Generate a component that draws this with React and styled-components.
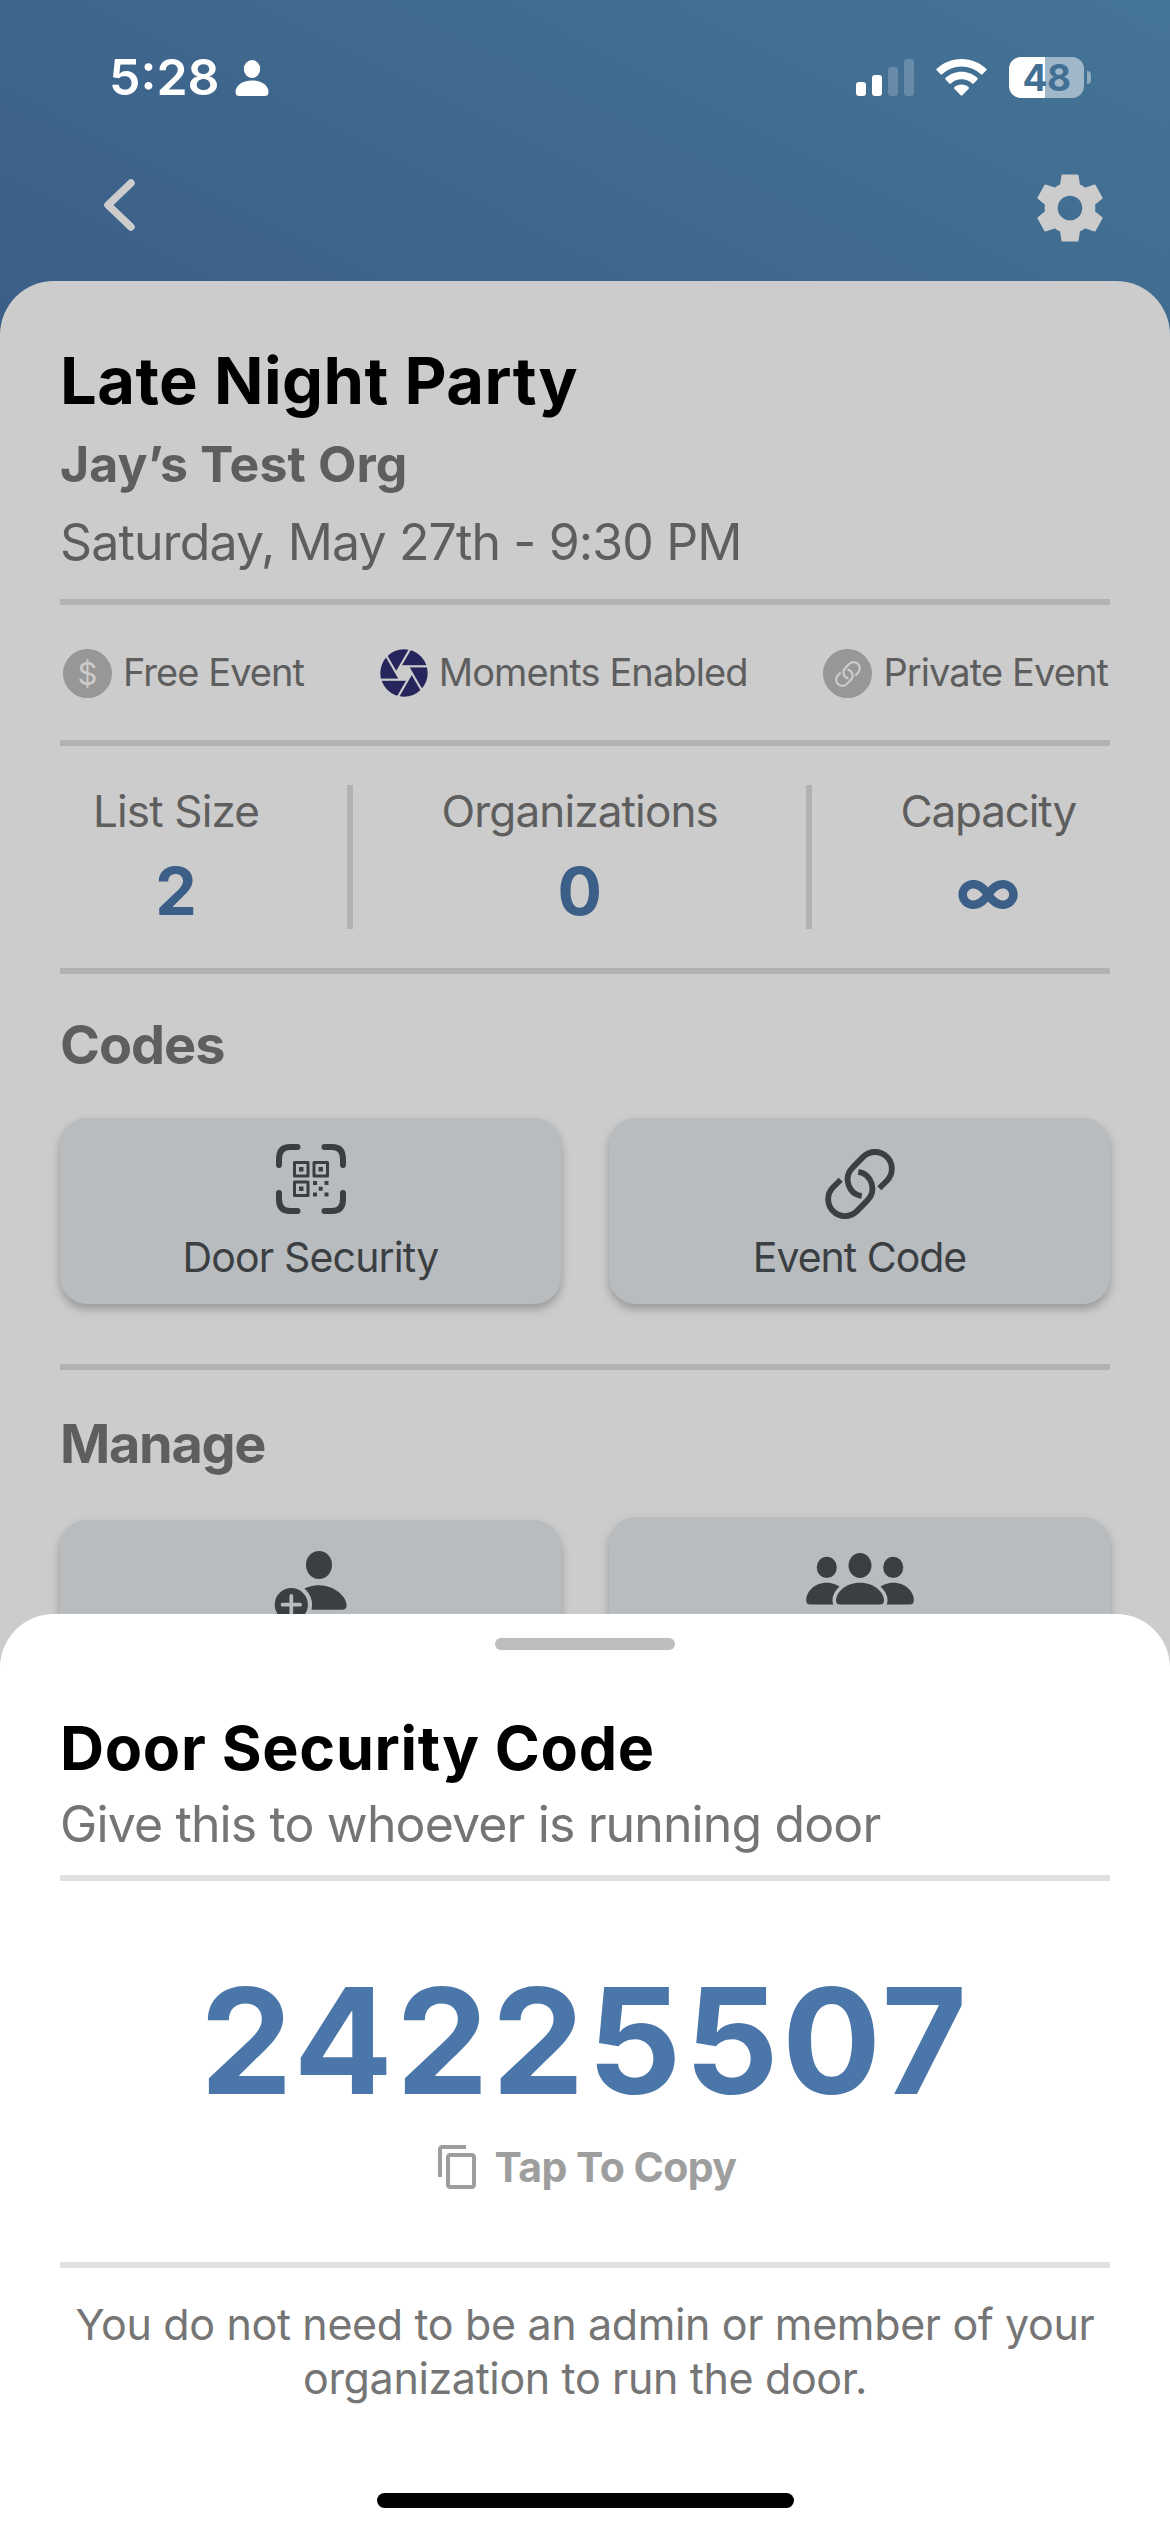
import React from "react";
import styled, { createGlobalStyle } from "styled-components";
import { MdContentCopy } from "react-icons/md";

const Global = createGlobalStyle`
  * { box-sizing: border-box; }
  body { margin: 0; font-family: Inter, "Liberation Sans", sans-serif; }
  svg { display: block; flex: none; }
`;

const Screen = styled.div`
  position: relative;
  width: 1170px;
  height: 2532px;
  overflow: hidden;
  background: linear-gradient(27deg, #3b5e87, #447496) top / 100% 340px no-repeat #ccc;
`;

const StatusBar = styled.div`
  display: flex;
  align-items: flex-end;
  height: 98px;
  padding: 0 79px 2px 109px;
  color: #fff;
`;

const Line = styled.div`
  white-space: nowrap;
  height: ${(p) => p.$h}px;
  line-height: ${(p) => p.$h}px;
  font-size: ${(p) => p.$size}px;
  font-weight: ${(p) => p.$weight || 400};
  letter-spacing: ${(p) => p.$track || 0}px;
  color: ${(p) => p.$color || "#5e5e5e"};
  margin-top: ${(p) => p.$top || 0}px;
`;

const StatusLeft = styled.div`
  display: flex;
  align-items: flex-end;
  gap: 15px;
  margin-right: auto;
`;

const StatusIcons = styled.div`
  display: flex;
  align-items: flex-end;
  gap: 22px;
`;

const BatteryWrap = styled.div`
  display: flex;
  align-items: center;
  gap: 3px;
  height: 41px;
  margin-bottom: -2px;
`;

const Battery = styled.div`
  width: 75px;
  height: 41px;
  border-radius: 12px;
  line-height: 41px;
  text-align: center;
  font-size: 37px;
  font-weight: 700;
  letter-spacing: -0.5px;
  color: #426f94;
  background: linear-gradient(90deg, #fff 48%, #a0b7c9 48%);
`;

const Nub = styled.div`
  width: 4px;
  height: 13px;
  border-radius: 0 5px 5px 0;
  background: #8fabc0;
`;

const NavBar = styled.div`
  display: flex;
  justify-content: space-between;
  align-items: flex-start;
  height: 183px;
  padding: 76px 67px 0 103px;
`;

const BackIcon = styled.svg`
  margin-top: 5px;
`;

const Card = styled.div`
  height: 2251px;
  padding: 62px 60px 0;
  border-radius: 54px 54px 0 0;
  background: #ccc;
`;

const Rule = styled.div`
  height: 6px;
  margin-top: ${(p) => p.$top || 0}px;
  background: ${(p) => p.$color || "#b2b2b2"};
`;

const Badges = styled.div`
  display: flex;
  justify-content: space-between;
  height: 135px;
  padding: 44px 2px 0 3px;
`;

const Badge = styled.div`
  display: flex;
  align-items: flex-start;
  gap: 11px;
`;

const Disc = styled.div`
  display: flex;
  align-items: center;
  justify-content: center;
  width: 49px;
  height: 49px;
  border-radius: 50%;
  background: #979797;
  color: #ccc;
  font-size: 31px;
  line-height: 49px;
`;

const Stats = styled.div`
  display: flex;
  justify-content: space-between;
  height: 222px;
  padding: 39px 34px 0 33px;
`;

const Stat = styled.div`
  display: flex;
  flex-direction: column;
  align-items: center;
`;

const Separator = styled.div`
  width: 6px;
  height: 144px;
  background: #b2b2b2;
`;

const Tiles = styled.div`
  display: grid;
  grid-template-columns: 501px 501px;
  column-gap: 48px;
  align-items: start;
  margin-top: ${(p) => p.$top}px;
`;

const Tile = styled.div`
  display: flex;
  flex-direction: column;
  align-items: center;
  height: 186px;
  margin-top: ${(p) => p.$drop || 0}px;
  padding-top: ${(p) => p.$pad}px;
  border-radius: 27px;
  background: #b8bcbf;
  color: #3b3f42;
  box-shadow: 0 5px 10px rgba(0, 0, 0, 0.26);
`;

const TileIcon = styled.div`
  height: ${(p) => p.$h}px;
`;

const Sheet = styled.div`
  position: absolute;
  left: 0;
  right: 0;
  bottom: 0;
  height: 918px;
  padding: 24px 60px 0;
  border-radius: 54px 54px 0 0;
  background: #fff;
`;

const Handle = styled.div`
  width: 180px;
  height: 12px;
  margin: 0 auto;
  border-radius: 6px;
  background: #bdbdbd;
`;

const Code = styled.div`
  margin-top: 70px;
  height: 180px;
  line-height: 180px;
  text-align: center;
  font-size: 147px;
  font-weight: 700;
  letter-spacing: 3.2px;
  color: #4b76a9;
`;

const CopyRow = styled.div`
  display: flex;
  justify-content: center;
  align-items: flex-start;
  gap: 13px;
  margin-top: 12px;
  height: 119px;
  color: #9e9e9e;
`;

const Note = styled.p`
  margin: 29px -20px 0;
  text-align: center;
  font-size: 43px;
  line-height: 54px;
  letter-spacing: -0.36px;
  color: #757575;
`;

const HomeBar = styled.div`
  width: 417px;
  height: 15px;
  margin: 88px auto 0;
  border-radius: 8px;
  background: #000;
`;

const PersonIcon = () => (
  <svg width="34" height="36" viewBox="0 0 34 36" fill="#fff">
    <ellipse cx="17" cy="9" rx="8.2" ry="9" />
    <path d="M0.5 32C0.5 26 7 20.500 17 20.500S33.500 26 33.500 32Q33.500 36 30 36H4Q0.500 36 0.500 32Z" />
  </svg>
);

const SignalIcon = () => (
  <svg width="58" height="37" viewBox="0 0 58 37" fill="#fff">
    <rect x="0" y="23" width="10" height="14" rx="3" />
    <rect x="16" y="16" width="10" height="21" rx="3" />
    <rect x="32" y="8" width="10" height="29" rx="3" opacity=".2" />
    <rect x="48" y="0" width="10" height="37" rx="3" opacity=".2" />
  </svg>
);

const WifiIcon = () => (
  <svg width="51" height="37" viewBox="0 0 51 37" fill="#fff">
    <path d="M25.500 0C35.200 0 44 3.800 50.300 9.800Q51 10.500 50.300 11.300L46.500 15.200Q45.700 16 44.900 15.200A28 28 0 0 0 6.100 15.200Q5.300 16 4.500 15.200L.7 11.300Q0 10.500.7 9.800C7 3.800 15.800 0 25.500 0Z" />
    <path d="M25.500 12.800C31.700 12.800 37.300 15.200 41.500 19Q42.200 19.700 41.500 20.500L37.600 24.400Q36.900 25 36.100 24.400A15.800 15.800 0 0 0 14.900 24.400Q14.100 25 13.400 24.400L9.500 20.500Q8.800 19.700 9.500 19C13.700 15.200 19.300 12.800 25.500 12.800Z" />
    <path d="M25.500 25.500C28.300 25.500 30.800 26.600 32.700 28.200Q33.400 28.900 32.700 29.700L26.300 36.300Q25.500 37 24.700 36.300L18.300 29.700Q17.600 28.900 18.300 28.200C20.200 26.600 22.700 25.500 25.500 25.500Z" />
  </svg>
);

const GearIcon = () => (
  <svg width="66" height="68" viewBox="-33 -34 66 68">
    <path
      fill="#ccc"
      stroke="#ccc"
      strokeWidth="2"
      strokeLinejoin="round"
      fillRule="evenodd"
      d="M-7.500 -32.500H7.500L9 -22.800Q12.300 -21.500 15 -19.300L24.700 -22.500L31.600 -10L24 -3.800Q24.700 0 24 3.800L31.600 10L24.700 22.500L15 19.300Q12.300 21.500 9 22.800L7.500 32.500H-7.500L-9 22.800Q-12.300 21.500 -15 19.300L-24.700 22.500L-31.600 10L-24 3.800Q-24.700 0 -24 -3.800L-31.600 -10L-24.700 -22.500L-15 -19.300Q-12.300 -21.500 -9 -22.800ZM0 -13.300A13.300 13.300 0 1 0 0 13.300A13.300 13.300 0 1 0 0 -13.300Z"
    />
  </svg>
);

const ApertureIcon = () => (
  <svg width="48" height="48" viewBox="-24 -24 48 48">
    <circle r="23.700" fill="#27265c" />
    <path d="M-3.800 -6.600H3.800L7.600 0L3.800 6.600H-3.800L-7.600 0Z" fill="#ccc" />
    <g stroke="#ccc" strokeWidth="2.200">
      {[0, 60, 120, 180, 240, 300].map((a) => (
        <path key={a} d="M-3 -6.700H25" transform={`rotate(${a})`} />
      ))}
    </g>
  </svg>
);

const LinkIcon = ({ size }) => (
  <svg width={size} height={size} viewBox="0 0 70 70" fill="none" stroke="currentColor" strokeWidth="5.800">
    <path d="M54.300 39.300L61.900 31.700A16.800 16.800 0 0 0 38.100 7.900L27.600 18.600A16.800 16.800 0 0 0 36.700 47.100" />
    <path d="M15.700 30.700L8.100 38.300A16.800 16.800 0 0 0 31.900 62.100L42.400 51.400A16.800 16.800 0 0 0 33.300 22.900" />
  </svg>
);

const PersonAddIcon = () => (
  <svg width="73" height="71" viewBox="0 0 73 71">
    <ellipse cx="45" cy="14" rx="13" ry="14" fill="#3b3f42" />
    <path d="M18 54C18 44 30 34.200 45 34.200C61 34.200 72.600 46 72.600 54.500Q72.600 58.700 68 58.700H22Q18 58.700 18 54Z" fill="#3b3f42" />
    <circle cx="17.300" cy="53.700" r="20.800" fill="#b8bcbf" />
    <circle cx="17.300" cy="53.700" r="16.600" fill="#3b3f42" />
    <path d="M8.500 53.700H26.100M17.300 44.900V62.500" stroke="#b8bcbf" strokeWidth="3.700" strokeLinecap="round" />
  </svg>
);

const PeopleIcon = () => (
  <svg width="108" height="52" viewBox="0 0 108 52" fill="#3b3f42">
    <ellipse cx="20.800" cy="14.400" rx="10" ry="10.700" />
    <ellipse cx="87.200" cy="14.400" rx="10" ry="10.700" />
    <path d="M.2 47C.2 39 8 29.700 20.600 29.700S41 39 41 47Q41 51.500 37 51.500H4Q.2 51.500.2 47Z" />
    <path d="M67 47C67 39 74.800 29.700 87.400 29.700S107.800 39 107.800 47Q107.800 51.500 104 51.500H71Q67 51.500 67 47Z" />
    <path d="M30 47.500C30 40 39 29.700 54 29.700S78 40 78 47.500Q78 51.500 74 51.500H34Q30 51.500 30 47.500Z" stroke="#b8bcbf" strokeWidth="7" paintOrder="stroke" />
    <ellipse cx="54" cy="12.500" rx="11.500" ry="12.500" />
  </svg>
);

const QrIcon = () => (
  <svg width="70" height="70" viewBox="0 0 70 70" fill="none" stroke="currentColor">
    <g strokeWidth="6" strokeLinecap="round">
      <path d="M3 21V15Q3 3 14 3H21.500" />
      <path d="M48.500 3H56Q67 3 67 15V21" />
      <path d="M67 49V55Q67 67 56 67H48.500" />
      <path d="M21.500 67H14Q3 67 3 55V49" />
    </g>
    <g strokeWidth="3" strokeLinejoin="round">
      <rect x="18.500" y="18.500" width="13.500" height="13.500" />
      <rect x="38" y="18.500" width="13.500" height="13.500" />
      <rect x="18.500" y="38" width="13.500" height="13.500" />
    </g>
    <g fill="currentColor" stroke="none">
      <rect x="23" y="23" width="4.500" height="4.500" />
      <rect x="42.500" y="23" width="4.500" height="4.500" />
      <rect x="23" y="42.500" width="4.500" height="4.500" />
      <rect x="37" y="37" width="4" height="4" />
      <rect x="48.500" y="37" width="4" height="4" />
      <rect x="42.700" y="42.700" width="4" height="4" />
      <rect x="37" y="48.500" width="4" height="4" />
      <rect x="48.500" y="48.500" width="4" height="4" />
    </g>
  </svg>
);

const StatItem = ({ label, value, track }) => (
  <Stat>
    <Line $h={52} $size={44} $track={track}>{label}</Line>
    <Line $h={80} $top={14} $size={66} $weight={700} $color="#3c5f88">{value}</Line>
  </Stat>
);

export default function App() {
  return (
    <Screen>
      <Global />
      <StatusBar>
        <StatusLeft>
          <Line $h={37} $size={50} $weight={600} $color="#fff">5:28</Line>
          <PersonIcon />
        </StatusLeft>
        <StatusIcons>
          <SignalIcon />
          <WifiIcon />
          <BatteryWrap>
            <Battery>48</Battery>
            <Nub />
          </BatteryWrap>
        </StatusIcons>
      </StatusBar>
      <NavBar>
        <BackIcon width="32" height="52" viewBox="0 0 32 52" fill="none" stroke="#ccc" strokeWidth="7.500" strokeLinecap="round" strokeLinejoin="round">
          <path d="M28 4L5 26L28 48" />
        </BackIcon>
        <GearIcon />
      </NavBar>
      <Card>
        <Line $h={76} $size={65} $weight={700} $track={0.45} $color="#000">Late Night Party</Line>
        <Line $h={60} $top={15} $size={50} $weight={700} $track={0.1}>Jay’s Test Org</Line>
        <Line $h={60} $top={18} $size={50} $track={-0.87}>Saturday, May 27th - 9:30 PM</Line>
        <Rule $top={27} />
        <Badges>
          <Badge>
            <Disc>$</Disc>
            <Line $h={46} $size={38} $track={-0.95}>Free Event</Line>
          </Badge>
          <Badge>
            <ApertureIcon />
            <Line $h={46} $size={38} $track={-0.9}>Moments Enabled</Line>
          </Badge>
          <Badge>
            <Disc><LinkIcon size={26} /></Disc>
            <Line $h={46} $size={38} $track={-0.9}>Private Event</Line>
          </Badge>
        </Badges>
        <Rule />
        <Stats>
          <StatItem label="List Size" value="2" track={-0.85} />
          <Separator />
          <StatItem label="Organizations" value="0" track={-0.85} />
          <Separator />
          <StatItem label="Capacity" value="∞" track={-1.15} />
        </Stats>
        <Rule />
        <Line $h={66} $top={38} $size={54} $weight={700} $track={-1}>Codes</Line>
        <Tiles $top={40}>
          <Tile $pad={26}>
            <TileIcon $h={88}><QrIcon /></TileIcon>
            <Line $h={50} $size={41} $track={-0.85} $color="#3b3f42">Door Security</Line>
          </Tile>
          <Tile $pad={31}>
            <TileIcon $h={83}><LinkIcon size={70} /></TileIcon>
            <Line $h={50} $size={41} $track={-1} $color="#3b3f42">Event Code</Line>
          </Tile>
        </Tiles>
        <Rule $top={60} />
        <Line $h={66} $top={41} $size={54} $weight={700} $track={-1.3}>Manage</Line>
        <Tiles $top={40}>
          <Tile $pad={31} $drop={3}>
            <PersonAddIcon />
          </Tile>
          <Tile $pad={36}>
            <PeopleIcon />
          </Tile>
        </Tiles>
      </Card>
      <Sheet>
        <Handle />
        <Line $h={76} $top={60} $size={61} $weight={700} $track={0.7} $color="#000">Door Security Code</Line>
        <Line $h={60} $top={8} $size={50} $track={-0.87} $color="#757575">Give this to whoever is running door</Line>
        <Rule $top={21} $color="#e0e0e0" />
        <Code>24225507</Code>
        <CopyRow>
          <MdContentCopy size={48} />
          <Line $h={48} $size={41} $weight={700} $track={-0.55} $color="#9e9e9e">Tap To Copy</Line>
        </CopyRow>
        <Rule $color="#e0e0e0" />
        <Note>
          You do not need to be an admin or member of your
          <br />
          organization to run the door.
        </Note>
        <HomeBar />
      </Sheet>
    </Screen>
  );
}
